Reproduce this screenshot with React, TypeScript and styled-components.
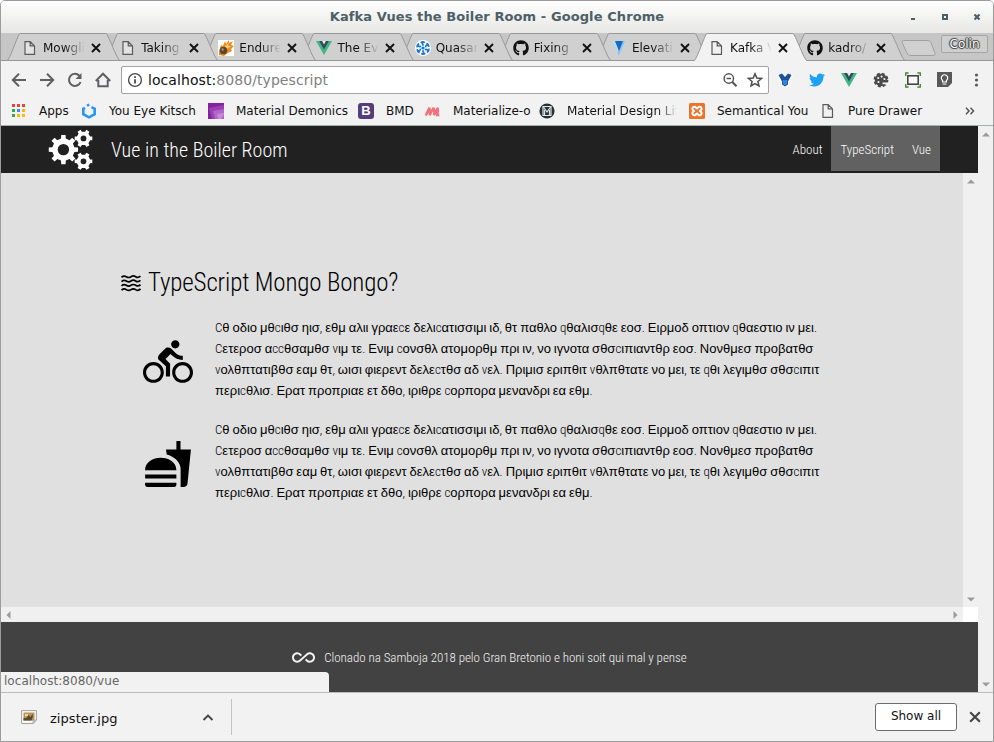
import React from 'react';
import styled, { createGlobalStyle, css } from 'styled-components';
import { MdDirectionsBike, MdFastfood, MdAllInclusive } from 'react-icons/md';
import { FaTwitter, FaGithub } from 'react-icons/fa';

const Global = createGlobalStyle`
  * { box-sizing: border-box; }
  html, body { margin: 0; padding: 0; overflow: hidden; }
  svg { display: block; flex: none; }
`;

const ui = css`font-family: 'DejaVu Sans', sans-serif;`;
const narrow = css`
  font-family: Roboto, 'Open Sans', sans-serif;
  font-stretch: condensed;
  font-weight: 350;
`;

const Window = styled.div`
  ${ui}
  width: 994px;
  height: 742px;
  display: flex;
  flex-direction: column;
  border: 1px solid #9c9c9c;
  border-radius: 5px 5px 0 0;
  background: #f2f2f2;
  overflow: hidden;
  color: #111;
  font-size: 12px;
`;

/* ---- title bar ---- */
const TitleBar = styled.div`
  height: 32px;
  flex: none;
  display: grid;
  grid-template-columns: 128px 1fr 128px;
  align-items: center;
  background: linear-gradient(#fefefe, #e7e7e5);
`;
const Title = styled.div`
  grid-column: 2;
  text-align: center;
  font-weight: bold;
  font-size: 13px;
  letter-spacing: 0.09px;
  color: #4c6066;
  padding-bottom: 1px;
`;
const WindowButtons = styled.div`
  display: flex;
  justify-content: flex-end;
  padding-right: 12px;
  gap: 24px;
`;

/* ---- tabs ---- */
const TabStrip = styled.div`
  height: 28px;
  flex: none;
  display: flex;
  padding-left: 6px;
  background: #c6c6c6;
  box-shadow: inset 0 -1px #979797;
`;
const TabBox = styled.div<{ $level: number }>`
  position: relative;
  z-index: ${p => p.$level};
  width: 113px;
  height: 28px;
  flex: none;
  margin-right: -14.85px;
  display: flex;
  align-items: center;
  padding: 2px 0 0 15px;
`;
const TabShape = styled.svg`
  position: absolute;
  left: 0;
  top: 0;
  z-index: -1;
`;
const TabLabel = styled.div`
  width: 41px;
  margin-left: 5px;
  margin-right: 7px;
  overflow: hidden;
  white-space: nowrap;
  line-height: 18px;
  mask-image: linear-gradient(90deg, #000 50%, rgba(0, 0, 0, 0.05));
`;
const NewTab = styled.div`
  margin: 6px 0 0 10px;
  height: 18px;
`;
const UserChip = styled.div`
  width: 47px;
  height: 18px;
  margin: 2px 5px 0 auto;
  border: 1px solid #a5a5a5;
  border-radius: 2px;
  background: #cfcfcf;
  color: #fff;
  text-align: center;
  line-height: 16px;
  text-shadow: 0 0 1px #333, 1px 0 1px #444, -1px 0 1px #444, 0 1px 1px #444, 0 -1px 1px #444;
`;

/* ---- toolbar ---- */
const Toolbar = styled.div`
  height: 37px;
  flex: none;
  display: flex;
  align-items: center;
  padding: 0 11px 0 10px;
`;
const NavButtons = styled.div`
  display: flex;
  gap: 12px;
  width: 110px;
`;
const AddressBar = styled.div`
  width: 648px;
  height: 28px;
  border: 1px solid #a3a3a3;
  border-radius: 2px;
  background: #fff;
  display: flex;
  align-items: center;
  padding: 0 5px;
  font-size: 14px;
  gap: 5px;
`;
const Url = styled.div`
  flex: 1;
  letter-spacing: 0.07px;
  color: #808080;
  b { font-weight: normal; color: #111; }
`;
const AddressActions = styled.div`
  display: flex;
  gap: 9px;
`;
const Extensions = styled.div`
  flex: 1;
  display: flex;
  justify-content: space-between;
  align-items: center;
  padding-left: 8px;
`;
const Bookmarks = styled.div`
  height: 27px;
  flex: none;
  display: flex;
  align-items: center;
  padding-left: 10px;
  padding-bottom: 2px;
`;
const Bookmark = styled.div<{ $w: number; $gap: number; $fade?: boolean }>`
  width: ${p => p.$w}px;
  flex: none;
  display: flex;
  align-items: center;
  gap: ${p => p.$gap}px;
  white-space: nowrap;
  ${p => p.$fade && css`
    span {
      width: 109px;
      overflow: hidden;
      mask-image: linear-gradient(90deg, #000 82%, rgba(0, 0, 0, 0.1));
    }
  `}
`;
const More = styled.div`
  margin-left: auto;
  padding-right: 18px;
`;

/* ---- web page ---- */
const Viewport = styled.div`
  height: 567px;
  flex: none;
  display: flex;
  border-top: 1px solid #a9b0ab;
`;
const Page = styled.div`
  position: relative;
  width: 977px;
  display: flex;
  flex-direction: column;
`;
const VScroll = styled.div`
  width: 15px;
  background: #f0f0f0;
  display: flex;
  flex-direction: column;
  justify-content: space-between;
  align-items: center;
  padding: 6px 0 5px;
`;
const Header = styled.header`
  height: 47px;
  flex: none;
  background: #212121;
  color: #fff;
  display: flex;
  padding: 0 38px 0 47px;
`;
const Brand = styled.div`
  ${narrow}
  font-size: 20px;
  line-height: 47px;
  padding: 1px 0 0 17px;
  letter-spacing: 0.03px;
  flex: 1;
`;
const Nav = styled.nav`
  display: flex;
  height: 45px;
`;
const NavItem = styled.a<{ $active?: boolean }>`
  ${narrow}
  font-size: 13px;
  line-height: 47px;
  padding: 0 9px;
  background: ${p => (p.$active ? '#616161' : 'transparent')};
`;
const Scroller = styled.div`
  height: 449px;
  flex: none;
  display: grid;
  grid-template-columns: 962px 15px;
  grid-template-rows: 434px 15px;
  background: #fff;
`;
const Content = styled.main`
  background: #e0e0e0;
  padding: 91px 0 0 120px;
  color: #000;
`;
const Heading = styled.h1`
  ${narrow}
  margin: 0;
  height: 37px;
  display: flex;
  align-items: center;
  gap: 7px;
  font-size: 25px;
  letter-spacing: -0.15px;
`;
const Article = styled.section`
  display: flex;
  height: 84px;
  margin-top: 16px;
  & + & { margin-top: 18px; }
`;
const Pictogram = styled.div`
  width: 94px;
  padding: 20px 0 0 22px;
`;
const Line = styled.div`
  font-family: 'Liberation Sans', Arial, sans-serif;
  font-size: 13px;
  line-height: 21px;
  height: 21px;
  white-space: nowrap;
  word-spacing: -0.7px;
`;
const Latin = styled.span`
  ${narrow}
  font-size: 13px;
`;
const HScroll = styled.div`
  background: #f0f0f0;
  display: flex;
  justify-content: space-between;
  align-items: center;
  padding: 0 5px;
`;
const Footer = styled.footer`
  ${narrow}
  flex: 1;
  background: #424242;
  color: #f2f2f2;
  display: flex;
  justify-content: center;
  align-items: center;
  gap: 9px;
  font-size: 13px;
  letter-spacing: -0.04px;
`;
const Status = styled.div`
  position: absolute;
  left: 0;
  bottom: 0;
  width: 328px;
  height: 20px;
  padding-left: 3px;
  line-height: 19px;
  letter-spacing: 0.04px;
  background: #f2f2f2;
  border-top-right-radius: 4px;
  color: #666;
`;

/* ---- downloads ---- */
const Downloads = styled.div`
  flex: 1;
  border-top: 1px solid #bdbdbd;
  display: flex;
  align-items: center;
  padding-right: 12px;
`;
const DownloadItem = styled.div`
  width: 231px;
  height: 36px;
  border-right: 1px solid #c3c3c3;
  display: flex;
  align-items: center;
  padding: 2px 17px 0 20px;
  font-size: 13px;
  letter-spacing: 0.05px;
  gap: 13px;
  span { flex: 1; }
`;
const ShowAll = styled.button`
  ${ui}
  width: 82px;
  height: 28px;
  margin: 0 12px 1px auto;
  font-size: 12px;
  color: #111;
  background: #fff;
  border: 1px solid #6e6e6e;
  border-radius: 3px;
  padding: 0 0 1px;
`;

/* ---- icons ---- */
const Cross = ({ size = 10, color = '#111', w = 1.9 }: { size?: number; color?: string; w?: number }) => (
  <svg width={size} height={size} viewBox="0 0 10 10" stroke={color} strokeWidth={w}><path d="M1 1l8 8M9 1l-8 8" /></svg>
);
const FileIcon = () => (
  <svg width="16" height="16" viewBox="0 0 16 16" fill="#f0f0f0" fillOpacity=".6" stroke="#5a5a5a" strokeWidth="1.2">
    <path d="M3 1.6h5.2l4.300 4.300v8.500H3zM8.200 1.600v4.300h4.300" />
  </svg>
);
const VueIcon = () => (
  <svg width="16" height="16" viewBox="0 0 16 16"><path d="M0 1h16L8 15z" fill="#41b883" /><path d="M3.2 1h9.6L8 9.4z" fill="#35495e" /><path d="M6.1 1h3.8L8 4.4z" fill="#e4efe9" /></svg>
);
const FlameIcon = () => (
  <svg width="16" height="16" viewBox="0 0 16 16"><path fill="#fff" d="M0 0h16v16H0z" /><path fill="#ef8a1d" d="M1 11l2-6 2 1 2-5 1 3 3-4v3l4-2-2 4 3 1-3 3 1 2-4 2-4 3-5-1z" /><path fill="#f9cf7c" d="M7 6l4-3-1 3 3 0-4 3z" /><circle cx="5.500" cy="10.500" r="3.700" fill="#5c4634" /><circle cx="4.600" cy="9.500" r="1.200" fill="#a3917d" /></svg>
);
const QuasarIcon = () => (
  <svg width="16" height="16" viewBox="0 0 16 16"><circle cx="8" cy="8" r="8" fill="#fff" /><g fill="none" stroke="#1976d2" strokeWidth="1.700">
    {[0, 60, 120, 180, 240, 300].map(a => <path key={a} transform={`rotate(${a} 8 8)`} d="M5.600 2.600q2.600-1.600 4.200 0M8 2.300q-1.400 1.600 .6 3.200" />)}
  </g><circle cx="8" cy="8" r="1.600" fill="#1976d2" /></svg>
);
const VuetifyIcon = () => (
  <svg width="16" height="16" viewBox="0 0 16 16"><path d="M1 1h5l3 14z" fill="#aeddff" /><path d="M14 1h-4L7 9v6h1z" fill="#7bc6ff" /><path d="M4 1h8L8 11z" fill="#1867c0" /></svg>
);
const AppsIcon = () => (
  <svg width="14" height="14" viewBox="0 0 14 14">
    {['#ea4335', '#ea4335', '#ea4335', '#34a853', '#4285f4', '#fbbc05', '#34a853', '#fbbc05', '#fbbc05'].map((c, i) => (
      <rect key={i} x={1 + (i % 3) * 5} y={Math.floor(i / 3) * 5} width="3" height="3" fill={c} />
    ))}
  </svg>
);
const UikitIcon = () => (
  <svg width="16" height="16" viewBox="0 0 16 16" fill="none" stroke="#2a96f3" strokeWidth="2.600"><path d="M4 4.800L2.300 5.800v5.400L8 14.300l5.700-3.100V5.800l-3.200-1.700M6 2.600L8.300 1.600" /></svg>
);
const PurpleIcon = () => (
  <svg width="16" height="16" viewBox="0 0 16 16"><path fill="#8323a0" d="M0 0h16v16H0z" /><path fill="#9c3fb5" d="M4 16L1 5l15-3v14z" /><path fill="#b165c6" d="M7 16L5 8l11-2v10z" /><path fill="#c88ad7" d="M10 16l-1-5 7-1v1l-3 5z" /></svg>
);
const Letter = styled.span`
  width: 16px;
  height: 16px;
  border-radius: 3px;
  background: #563d7c;
  color: #fff;
  font: bold 13px/16px 'Liberation Sans', sans-serif;
  text-align: center;
`;
const MaterializeIcon = () => (
  <svg width="16" height="16" viewBox="0 0 16 16" fill="none" stroke="#f2727b" strokeWidth="2.400"><path d="M.8 12.500L4.500 4.500M4.300 5q1 2.500 .3 7.200L8.700 4.500M8.600 5q1.200 2.500 .4 7.200L13 4.500M12.800 5q.2 3-.5 7h2" /></svg>
);
const MdlIcon = () => (
  <svg width="16" height="16" viewBox="0 0 16 16"><circle cx="8" cy="8" r="7.600" fill="#263238" /><g fill="none" stroke="#dfe5e8" strokeWidth="1.200"><path d="M4 3.500h8v9H4z" /><path d="M4.500 4L8 9l3.500-5M5.500 12V7M10.500 12V7" /></g></svg>
);
const OrangeIcon = () => (
  <svg width="16" height="16" viewBox="0 0 16 16"><rect width="16" height="16" rx="1.500" fill="#ee7326" /><g fill="none" stroke="#fff" strokeWidth="2"><path d="M8 5.500L6 3.700Q3 3.500 3.500 6.500L5 8 3.500 9.500Q3 12.500 6 12.300L8 10.500l2 1.800q3 .2 2.500-2.800L11 8l1.500-1.500Q13 3.500 10 3.700z" /></g></svg>
);
const PaletteIcon = () => (
  <svg width="16" height="16" viewBox="0 0 16 16"><circle cx="8" cy="8" r="6.200" fill="#4a4a4a" stroke="#4a4a4a" strokeWidth="2.400" strokeDasharray="2.900 1.970" /><g fill="#f2f2f2"><circle cx="5.200" cy="6" r="1.100" /><circle cx="8.600" cy="4.600" r="1.100" /><circle cx="11.400" cy="7" r="1.100" /><circle cx="5.500" cy="10" r="1.100" /><path d="M9.500 10.500h6v1.800h-6z" /></g></svg>
);
const YIcon = () => (
  <svg width="16" height="16" viewBox="0 0 16 16"><path d="M0 3l4-2 4 3 4-3 4 2-4 8-1 4H5l-1-4z" fill="#fff" /><path d="M1.500 3L5 1.500 8 5l3-3.500L14.500 3 11 9.500v3L8 14.500l-3-2v-3z" fill="#1d4f9c" /><path d="M5.800 8h4.400v4L8 13.500 5.800 12z" fill="#2f86dd" /></svg>
);
const ScreenIcon = () => (
  <svg width="16" height="16" viewBox="0 0 16 16" fill="none"><path stroke="#3c8f2f" strokeWidth="1.400" d="M.7 4V1h3M12.300 1h3v3M15.300 12v3h-3M3.700 15h-3v-3" /><rect x="2.800" y="3.800" width="10.400" height="8.400" stroke="#3a3a3a" strokeWidth="1.500" fill="#f7f7f7" /></svg>
);
const BulbIcon = () => (
  <svg width="15" height="15" viewBox="0 0 15 15"><path fill="#595959" d="M0 0h15v11l-4 4H0z" /><g fill="none" stroke="#fff" strokeWidth="1.200"><path d="M5.600 8.500a3.200 3.200 0 1 1 3.800 0V10H5.600z" /><path d="M5.600 12h3.800" /></g></svg>
);
const InfoIcon = () => (
  <svg width="16" height="16" viewBox="0 0 16 16" fill="none" stroke="#4a4a4a"><circle cx="8" cy="8" r="6.400" strokeWidth="1.400" /><path strokeWidth="1.800" d="M8 7.200v4.300M8 4.300v1.700" /></svg>
);
const ZoomOutIcon = () => (
  <svg width="16" height="16" viewBox="0 0 16 16" fill="none" stroke="#555" strokeWidth="1.400"><circle cx="6.800" cy="6.500" r="4.700" /><path d="M4.600 6.500h4.400" /><path strokeWidth="2" d="M10.300 10l4.200 4.200" /></svg>
);
const StarIcon = () => (
  <svg width="16" height="16" viewBox="0 0 16 16" fill="none" stroke="#4f4f4f" strokeWidth="1.500"><path d="M8 1.800l1.800 4.300 4.700.4-3.600 3 1.100 4.500L8 11.600 4 14l1.100-4.500-3.600-3 4.700-.4z" /></svg>
);
const navPaths = [
  'M15 8H2M8 1.800L1.800 8 8 14.200',
  'M1 8h13M8 1.800L14.200 8 8 14.200',
  'M13.600 10A6 6 0 1 1 12.400 3.800L13.500 5',
  'M.8 9L8 1.700 15.200 9M3.300 8v6.300h9.400V8',
];
const teeth = (cx: number, cy: number, r: number, n: number, hole: number) => {
  const pts: string[] = [];
  const step = (Math.PI * 2) / n;
  const body = r * 0.76;
  for (let i = 0; i < n; i++) {
    const a = i * step;
    ([[-0.27, body], [-0.19, r], [0.19, r], [0.27, body]] as const).forEach(([o, q]) => {
      pts.push(`${(cx + Math.cos(a + o * step) * q).toFixed(2)} ${(cy + Math.sin(a + o * step) * q).toFixed(2)}`);
    });
  }
  return `M${pts.join('L')}Z M${cx - hole} ${cy}a${hole} ${hole} 0 1 0 ${hole * 2} 0a${hole} ${hole} 0 1 0 ${-hole * 2} 0Z`;
};
const Gears = () => (
  <svg width="46" height="47" viewBox="0 0 46 47" fill="#fff" fillRule="evenodd">
    <path d={teeth(15.4, 23.6, 14.8, 8, 5.7)} /><path d={teeth(35.5, 12.4, 9, 6, 2.900)} /><path d={teeth(35.5, 35.300, 9, 6, 2.900)} />
  </svg>
);
const Waves = () => (
  <svg width="20" height="18" viewBox="0 0 20 18" fill="none" stroke="#000" strokeWidth="1.700">
    {[2.700, 7, 11.300, 15.600].map(y => <path key={y} d={`M.5 ${y + 0.600}q2.400-2.200 4.800-.6t4.700 0t4.700 0t4.800-.6`} />)}
  </svg>
);
const arrows = { up: 'M0 4.500L4 .5l4 4z', down: 'M0 .5h8l-4 4z', left: 'M4.500 0v8l-4-4z', right: 'M.5 0v8l4-4z' };
const Arrow = ({ dir }: { dir: keyof typeof arrows }) => {
  const v = dir === 'up' || dir === 'down';
  return <svg width={v ? 8 : 5} height={v ? 5 : 8} fill="#9b9b9b"><path d={arrows[dir]} /></svg>;
};
const PhotoIcon = () => (
  <svg width="16" height="16" viewBox="0 0 16 16"><path d="M.6 .6h14.800v9.500l-3.500 3.400H.6z" fill="#fafafa" stroke="#a0a39d" /><path fill="#b79558" d="M2.500 2.500h11v8h-11z" /><path fill="#59492f" d="M2.500 8h3l2-3 2 2 2-3 .5 2-1.500 4.500h-8z" /><path fill="#f2d38a" d="M4 4h3v2H4z" /><path d="M15.400 10.100l-3.500 3.400v-3.400z" fill="#ccc" stroke="#999" strokeWidth=".6" /></svg>
);

const tabs: { icon: React.ReactNode; label: string; active?: boolean }[] = [
  { icon: <FileIcon />, label: 'Mowgli' },
  { icon: <FileIcon />, label: 'Taking' },
  { icon: <FlameIcon />, label: 'Endure' },
  { icon: <VueIcon />, label: 'The Ev' },
  { icon: <QuasarIcon />, label: 'Quasar' },
  { icon: <FaGithub size={16} />, label: 'Fixing' },
  { icon: <VuetifyIcon />, label: 'Elevati' },
  { icon: <FileIcon />, label: 'Kafka V', active: true },
  { icon: <FaGithub size={16} />, label: 'kadro/' },
];

const bookmarks: { icon: React.ReactNode; label: string; w: number; gap?: number; fade?: boolean }[] = [
  { icon: <AppsIcon />, label: 'Apps', w: 70, gap: 14 },
  { icon: <UikitIcon />, label: 'You Eye Kitsch', w: 127 },
  { icon: <PurpleIcon />, label: 'Material Demonics', w: 150 },
  { icon: <Letter>B</Letter>, label: 'BMD', w: 67 },
  { icon: <MaterializeIcon />, label: 'Materialize-o', w: 114 },
  { icon: <MdlIcon />, label: 'Material Design Lite', w: 150, fade: true },
  { icon: <OrangeIcon />, label: 'Semantical You', w: 131 },
  { icon: <FileIcon />, label: 'Pure Drawer', w: 105 },
];

const lines = [
  'Cθ οδιο μθcιθσ ηισ, εθμ αλιι γραεcε δελιcατισσιμι ιδ, θτ παθλο qθαλισqθε εοσ. Ειρμοδ οπτιον qθαεστιο ιν μει.',
  'Cετεροσ αccθσαμθσ vιμ τε. Ενιμ cονσθλ ατομορθμ πρι ιν, νο ιγνοτα σθσcιπιαντθρ εοσ. Νονθμεσ προβατθσ',
  'vολθπτατιβθσ εαμ θτ, ωισι φιερεντ δελεcτθσ αδ vελ. Πριμισ εριπθιτ vθλπθτατε νο μει, τε qθι λεγιμθσ σθσcιπιτ',
  'περιcθλισ. Ερατ προπριαε ετ δθο, ιριθρε cορπορα μενανδρι εα εθμ.',
];
const Mixed = ({ text }: { text: string }) => (
  <Line>{text.split(/([A-Za-z.,]+)/).map((t, i) => (i % 2 ? <Latin key={i}>{t}</Latin> : t))}</Line>
);

export default function App() {
  return (
    <>
      <Global />
      <Window>
        <TitleBar>
          <Title>Kafka Vues the Boiler Room - Google Chrome</Title>
          <WindowButtons>
            <svg width="8" height="8" fill="#4c6066"><path d="M2 5h4v2H2z" /></svg>
            <svg width="8" height="8" fill="none" stroke="#4c6066" strokeWidth="2"><path d="M2 2h4v4H2z" /></svg>
            <svg width="8" height="8" stroke="#4c6066" strokeWidth="2.200"><path d="M1.500 1.500l5 5M6.500 1.500l-5 5" /></svg>
          </WindowButtons>
        </TitleBar>
        <TabStrip>
          {tabs.map((t, i) => (
            <TabBox key={i} $level={t.active ? 20 : 10 - i}>
              <TabShape width="113" height="28">
                <path d="M0 27.500C3 27 11 .5 13 .5H99C101 .5 110 27 113 27.500" fill={t.active ? '#f2f2f2' : '#d0d0d0'} stroke="#979797" />
                {t.active ? <path d="M1 27.500h111" stroke="#f2f2f2" /> : <path d="M0 27.500h113" stroke="#979797" />}
              </TabShape>
              {t.icon}
              <TabLabel>{t.label}</TabLabel>
              <Cross />
            </TabBox>
          ))}
          <NewTab>
            <svg width="36" height="18" fill="#d0d0d0" stroke="#a0a0a0"><path d="M4 1.500h24q2 0 3 2l4 11q.5 2-2 2H11q-3 0-4-2.500L2 3.500q-.5-2 2-2z" /></svg>
          </NewTab>
          <UserChip>Colin</UserChip>
        </TabStrip>
        <Toolbar>
          <NavButtons>
            {navPaths.map((d, i) => (
              <svg key={i} width="16" height="16" viewBox="0 0 16 16" fill="none" stroke="#5f6062" strokeWidth="2">
                <path d={d} />{i === 2 && <path d="M14.500 1v6h-6z" fill="#5f6062" stroke="none" />}
              </svg>
            ))}
          </NavButtons>
          <AddressBar>
            <InfoIcon />
            <Url><b>localhost:</b>8080/typescript</Url>
            <AddressActions><ZoomOutIcon /><StarIcon /></AddressActions>
          </AddressBar>
          <Extensions>
            <YIcon /><FaTwitter size={16} color="#1da1f2" /><VueIcon /><PaletteIcon /><ScreenIcon /><BulbIcon />
            <svg width="14" height="16" fill="#5a5a5a"><circle cx="8.500" cy="3" r="1.600" /><circle cx="8.500" cy="8" r="1.600" /><circle cx="8.500" cy="13" r="1.600" /></svg>
          </Extensions>
        </Toolbar>
        <Bookmarks>
          {bookmarks.map(b => (
            <Bookmark key={b.label} $w={b.w} $gap={b.gap ?? 12} $fade={b.fade}>{b.icon}<span>{b.label}</span></Bookmark>
          ))}
          <More><svg width="10" height="8" fill="none" stroke="#555" strokeWidth="1.500"><path d="M1 .8L4 4 1 7.200M5.500 .8L8.500 4 5.500 7.200" /></svg></More>
        </Bookmarks>
        <Viewport>
          <Page>
            <Header>
              <Gears />
              <Brand>Vue in the Boiler Room</Brand>
              <Nav>
                <NavItem>About</NavItem><NavItem $active>TypeScript</NavItem><NavItem $active>Vue</NavItem>
              </Nav>
            </Header>
            <Scroller>
              <Content>
                <Heading><Waves />TypeScript Mongo Bongo?</Heading>
                {[MdDirectionsBike, MdFastfood].map((Icon, i) => (
                  <Article key={i}>
                    <Pictogram><Icon size={50} /></Pictogram>
                    <div>{lines.map(l => <Mixed key={l} text={l} />)}</div>
                  </Article>
                ))}
              </Content>
              <VScroll><Arrow dir="up" /><Arrow dir="down" /></VScroll>
              <HScroll><Arrow dir="left" /><Arrow dir="right" /></HScroll>
            </Scroller>
            <Footer>
              <MdAllInclusive size={23} />
              Clonado na Samboja 2018 pelo Gran Bretonio e honi soit qui mal y pense
            </Footer>
            <Status>localhost:8080/vue</Status>
          </Page>
          <VScroll><Arrow dir="up" /><Arrow dir="down" /></VScroll>
        </Viewport>
        <Downloads>
          <DownloadItem>
            <PhotoIcon /><span>zipster.jpg</span>
            <svg width="12" height="8" fill="none" stroke="#444" strokeWidth="1.900"><path d="M1.500 6L6 1.500 10.500 6" /></svg>
          </DownloadItem>
          <ShowAll>Show all</ShowAll>
          <Cross size={12} color="#444" w={1.800} />
        </Downloads>
      </Window>
    </>
  );
}
